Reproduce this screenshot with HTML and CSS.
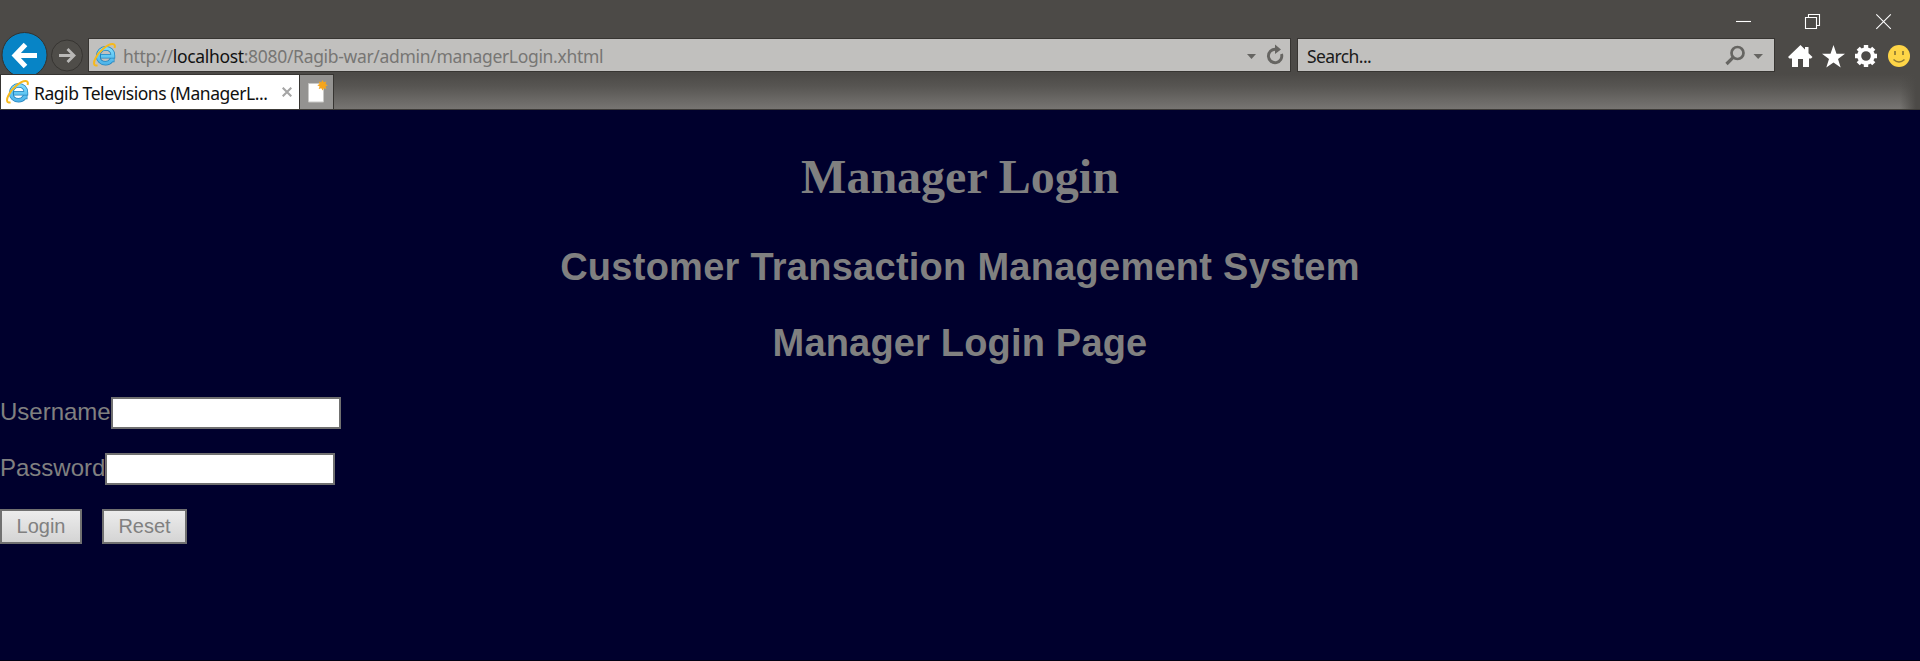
FILE: index.html
```html
<!DOCTYPE html>
<html lang="en">
<head>
<meta charset="utf-8">
<title>Ragib Televisions (ManagerLogin)</title>
<link rel="stylesheet" href="styles.css">
</head>
<body>
<svg width="0" height="0" class="defs">
  <defs>
    <linearGradient id="blue" gradientUnits="userSpaceOnUse" x1="0" y1="3" x2="0" y2="23"><stop offset="0" stop-color="#8be0fb"/><stop offset=".5" stop-color="#62c8f3"/><stop offset="1" stop-color="#49aee6"/></linearGradient>
    <symbol id="ie" viewBox="0 0 23 24">
      <path d="M21.500 17H18.500C17 19.300 15 20.300 12.600 20.300C8.300 20.300 5.200 17.200 5.200 12.900C5.200 8.600 8.500 5.400 12.700 5.400C17 5.400 19.900 8.500 19.900 12.500V13.300H7.500" fill="none" stroke="#2383bd" stroke-width="4.600"/>
      <path d="M20.800 17H18.500C17 19.300 15 20.300 12.600 20.300C8.300 20.300 5.200 17.200 5.200 12.900C5.200 8.600 8.500 5.400 12.700 5.400C17 5.400 19.900 8.500 19.900 12.500V13.300H8" fill="none" stroke="url(#blue)" stroke-width="3.100"/>
      <path d="M4.500 22.200C1 23.500-.1 20.300 2.500 15.300C6 8 14.500 1.300 19.500 1.100C21.800 1 22.300 2.800 21.500 5" fill="none" stroke="#f6b91c" stroke-width="2"/>
    </symbol>
  </defs>
</svg>
<header class="chrome">
  <div class="titlebar">
    <svg class="caption" width="160" height="20" viewBox="0 0 160 20" fill="none" stroke="#fff" stroke-width="1.1">
      <path d="M0 9.500H15"/>
      <path d="M69.500 5.500H80.500V16.500H69.500ZM72.500 5.500V2.500H83.500V13.500H80.500"/>
      <path d="M140.300 2.300l14.500 14.500M154.800 2.300l-14.500 14.500"/>
    </svg>
  </div>
  <div class="toolbar">
    <svg class="nav" width="88" height="42" viewBox="0 0 88 42">
      <circle cx="24.500" cy="23" r="22.500" fill="#0784c6" stroke="#34322f"/>
      <path d="M37 23.500H16M25.500 12.500L15 23.500L25.500 34.500" fill="none" stroke="#fff" stroke-width="5"/>
      <circle cx="67" cy="23.500" r="15.500" fill="#4f4d49" stroke="#373532"/>
      <path d="M59 23.500H73M67.500 17L74 23.500L67.500 30" fill="none" stroke="#b9b8b6" stroke-width="2.800"/>
    </svg>
    <div class="field address">
      <svg class="ie" width="23" height="24"><use href="#ie"/></svg>
      <span class="url">http://<b>localhost</b>:8080/Ragib-war/admin/managerLogin.xhtml</span>
      <svg class="controls" width="40" height="24" viewBox="0 0 40 24">
        <path d="M0 11H9L4.500 16Z" fill="#666562"/>
        <path d="M34.500 11A6.700 6.700 0 1 1 28.500 6.300" fill="none" stroke="#666562" stroke-width="2.900"/>
        <path d="M28 1.500L34 6.500L28 11Z" fill="#666562"/>
      </svg>
    </div>
    <div class="field search">
      <span class="hint">Search...</span>
      <svg class="lens" width="40" height="24" viewBox="0 0 40 24">
        <circle cx="12.500" cy="10" r="6" fill="none" stroke="#666562" stroke-width="2.700"/>
        <path d="M8.200 14.300L1.500 21" stroke="#666562" stroke-width="3.200"/>
        <path d="M28.500 11H38L33.200 16Z" fill="#666562"/>
      </svg>
    </div>
    <svg class="tools" width="124" height="26" viewBox="0 0 124 26">
      <path d="M12.500 1L0 13L1.500 14.500H4V23H10V15H15V23H21V14.500H23L24.500 13L20.500 9.200V3H17V5.500Z" fill="#fff"/>
      <path d="M45.500 1L48.500 9.700H57L50 15L52.700 23.500L45.500 18.500L38.300 23.500L41 15L34 9.700H42.500Z" fill="#fff"/>
      <g transform="translate(78 12)" fill="#fff">
        <circle r="6.800" fill="none" stroke="#fff" stroke-width="4"/>
        <g id="teeth"><path d="M-2.200-11h4.400v4h-4.400zM-2.200 7h4.400v4h-4.400zM-11-2.200h4v4.400h-4zM7-2.200h4v4.400h-4z"/></g>
        <use href="#teeth" transform="rotate(45)"/>
      </g>
      <circle cx="111" cy="12" r="11" fill="#fed547"/>
      <path d="M107 7v4M115 7v4" stroke="#8f7a35" stroke-width="1.700"/>
      <path d="M105.500 15.500Q111 20.500 116.500 15.500" fill="none" stroke="#8f7a35" stroke-width="1.500"/>
    </svg>
  </div>
  <div class="tabs">
    <div class="tab">
      <svg class="ie" width="23" height="24"><use href="#ie"/></svg>
      <span class="label">Ragib Televisions (ManagerL...</span>
      <svg class="close" width="10" height="10" viewBox="0 0 10 10"><path d="M.7.7l8.600 8.600M9.300.7L.7 9.300" stroke="#a5a5a5" stroke-width="2.100"/></svg>
    </div>
    <div class="newtab">
      <svg width="24" height="24" viewBox="0 0 24 24">
        <path d="M2.500 3.500H17.500V22H2.500Z" fill="#fff" stroke="#c9c9c7"/>
        <path d="M16.500 0l1.300 2.300 2.600-.9-.9 2.600 2.300 1.300-2.300 1.200.9 2.600-2.600-.9-1.300 2.300-1.200-2.300-2.600.9.900-2.600-2.300-1.200 2.300-1.300-.9-2.600 2.600.9z" fill="#f5a51d"/>
      </svg>
    </div>
    <div class="strip"></div>
  </div>
</header>
<main class="page">
  <h1>Manager Login</h1>
  <h2 class="system">Customer Transaction Management System</h2>
  <h2>Manager Login Page</h2>
  <form>
    <div class="row"><label for="u">Username</label><input id="u" type="text"></div>
    <div class="row"><label for="p">Password</label><input id="p" type="password"></div>
    <div class="actions"><button type="button" class="login">Login</button><button type="button" class="reset">Reset</button></div>
  </form>
</main>
</body>
</html>
```
FILE: styles.css
```css
* { box-sizing: border-box; }
body { margin: 0; height: 661px; overflow: hidden; background: #00002d; display: flex; flex-direction: column; font-family: "Liberation Sans", Arial, sans-serif; }
.defs { position: absolute; }
svg { display: block; flex: none; }
.chrome { height: 110px; flex: none; background: #4c4a47; font-family: "Noto Sans", "Open Sans", sans-serif; font-size: 17.5px; }
.titlebar { height: 32px; display: flex; justify-content: flex-end; padding: 12px 24px 0 0; }
.toolbar { height: 42px; display: flex; align-items: flex-start; }
.field { height: 34px; margin-top: 6px; border: 1px solid #373532; background: #c1c0be; display: flex; align-items: center; }
.address { width: 1203px; padding-left: 4px; }
.address .url { margin-left: 7px; padding-top: 2px; flex: 1; color: #777674; white-space: nowrap; letter-spacing: -0.32px; }
.url b { font-weight: 400; color: #111; }
.controls { margin-right: 3px; }
.search { width: 478px; margin-left: 6px; padding: 0 9px; color: #1a1a1a; }
.hint { flex: 1; padding-top: 2px; letter-spacing: -0.6px; }
.tools { margin: 12px 0 0 13px; }
.tabs { height: 36px; display: flex; border-bottom: 1px solid #3c3a37; }
.tab { width: 300px; background: #fff; border: 1px solid #373532; border-bottom: 0; display: flex; align-items: center; padding: 0 7px 0 5px; }
.label { width: 0; flex: 1; margin-left: 5px; padding-top: 2px; white-space: nowrap; color: #111; letter-spacing: -0.45px; }
.newtab { width: 34px; background: #949391; border: 1px solid #373532; border-width: 1px 1px 0 0; padding: 5px 0 0 6px; }
.strip { flex: 1; background: linear-gradient(to right, transparent calc(100% - 20px), #4c4a47 calc(100% - 4px)), linear-gradient(#4c4a47, #575552 35%, #777572); }
.page { flex: 1; color: #808080; border-bottom: 1px solid #000014; }
h1 { margin: 39px 0 0; font: bold 48px/56px "Liberation Serif", "Times New Roman", serif; text-align: center; }
h2 { margin: 0; font-size: 38px; line-height: 42px; letter-spacing: 0.18px; text-align: center; }
.system { margin-top: 41px; letter-spacing: 0.26px; }
h2 + h2 { margin-top: 34px; }
form { margin-top: 33px; font-size: 24px; }
.row { display: flex; height: 32px; margin-bottom: 24px; line-height: 29px; }
.row input { width: 230px; height: 32px; padding: 2px; border: 2px solid #707070; background: #fff; }
.actions { display: flex; gap: 20px; }
button { height: 35px; padding: 0; border: 2px solid #707070; background: linear-gradient(#ececec, #d4d4d4); color: #808080; font: 20px "Liberation Sans", Arial, sans-serif; }
.login { width: 82px; }
.reset { width: 85px; }
```
